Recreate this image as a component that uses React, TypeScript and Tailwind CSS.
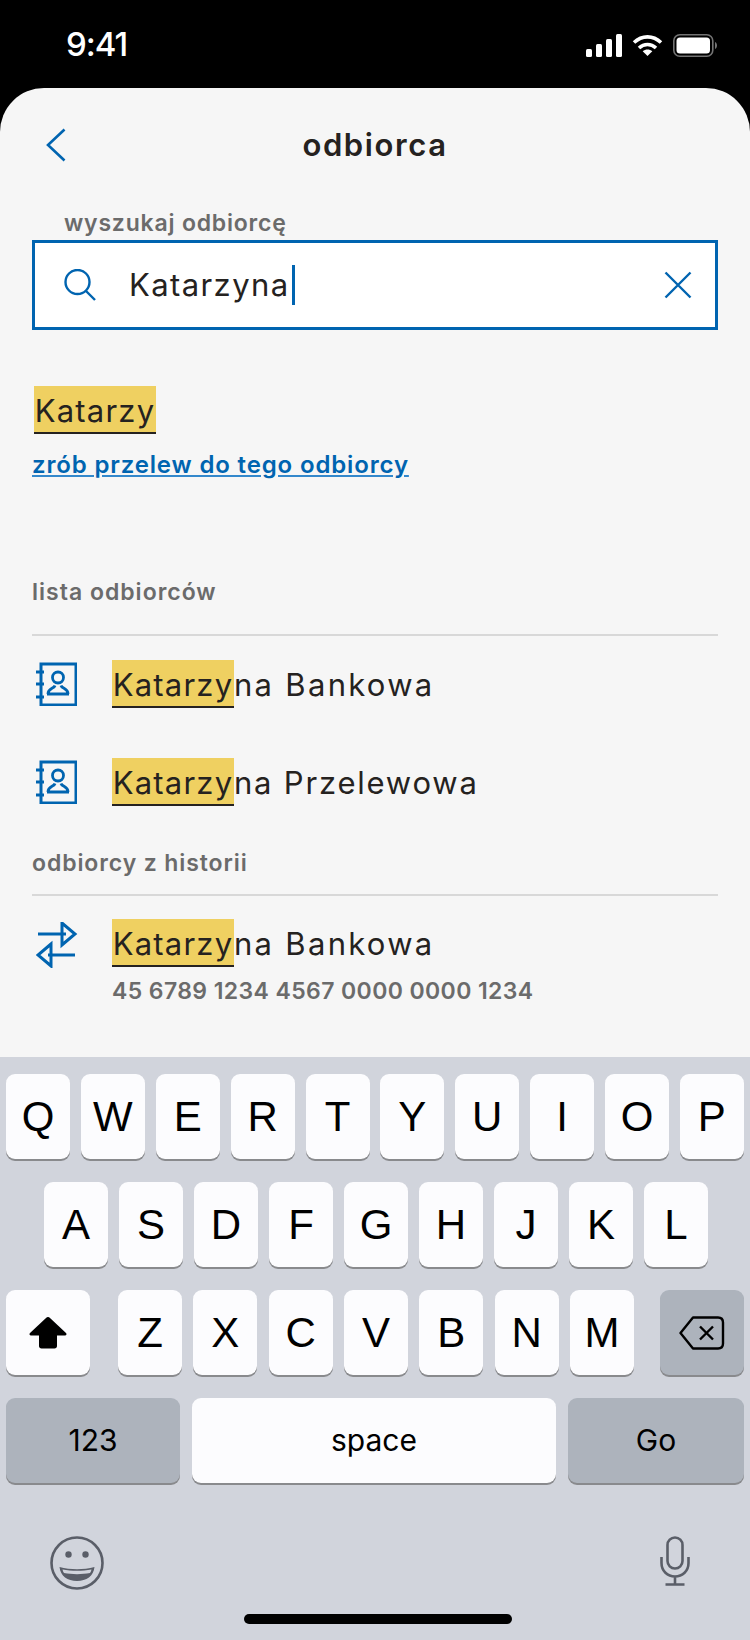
const ui = 'font-["Inter",sans-serif]'

function Hit({ rest, tight }: { rest?: string; tight?: boolean }) {
  return (
    <div className="flex h-12 items-center whitespace-nowrap text-[31px] leading-none text-[#252220]">
      <span className="flex h-12 w-[122px] items-center justify-center border-b-2 border-[#252220] bg-[#efd061] pt-[2px] tracking-[1.200px]">Katarzy</span>
      {rest && <span className={`pt-[1px] ${tight ? 'tracking-[1.800px]' : 'tracking-[2.300px]'}`}>{rest}</span>}
    </div>
  )
}

function BookIcon() {
  return (
    <svg width="42" height="44" viewBox="0 0 42 44" fill="none" stroke="#0064b0" strokeWidth="3">
      <rect x="6" y="2" width="35" height="41" />
      <path d="M1 10h8M1 22h8M1 35h8" />
      <circle cx="23" cy="15.500" r="5.500" strokeWidth="2.800" />
      <path d="M13 32c0-6 6-5 7-8.500M33 32c0-6-6-5-7-8.500M12 32h22" strokeWidth="2.800" />
    </svg>
  )
}

function SwapIcon() {
  return (
    <svg width="42" height="46" viewBox="0 0 42 46" fill="none" stroke="#0064b0" strokeWidth="3">
      <path d="M2 12h28M26 1l13 11-13 11z" />
      <path d="M39 33H12M15 22L2 33l13 11z" />
    </svg>
  )
}

function Key({ label, wide }: { label: string; wide?: boolean }) {
  return (
    <div className={`flex h-[85px] items-center justify-center rounded-[9px] bg-[#fcfcfe] text-[#000] shadow-[0_2px_0_#898a8d] ${wide ? 'w-[364px] text-[30px]' : 'w-16 font-["Liberation_Sans",sans-serif] text-[42px]'}`}>
      {label}
    </div>
  )
}

function DarkKey({ width, children }: { width: string; children: React.ReactNode }) {
  return (
    <div className={`flex h-[85px] items-center justify-center rounded-[9px] bg-[#adb3bc] text-[30px] text-[#000] shadow-[0_2px_0_#898a8d] ${width}`}>
      {children}
    </div>
  )
}

export default function App() {
  return (
    <div className={`flex h-[1640px] w-[750px] flex-col overflow-hidden bg-black ${ui}`}>
      {/* status bar */}
      <div className="flex h-[88px] shrink-0 items-start justify-between pl-[66px] pr-[33px] pt-[24px] text-white">
        <span className="text-[33px] font-medium leading-[40px] tracking-[-1px]">9:41</span>
        <div className="flex items-center gap-[10px] pt-[10px]">
          <svg width="36" height="23" viewBox="0 0 36 23" fill="white">
            <rect x="0" y="15" width="6" height="8" rx="1.5" />
            <rect x="10" y="10" width="6" height="13" rx="1.5" />
            <rect x="20" y="5" width="6" height="18" rx="1.5" />
            <rect x="30" y="0" width="6" height="23" rx="1.5" />
          </svg>
          <svg width="31" height="23" viewBox="0 0 31 23" fill="none" stroke="white" strokeWidth="3.6">
            <path d="M2 8.5c8-7.5 19-7.5 27 0" />
            <path d="M7 14c5-4.6 12-4.6 17 0" />
            <path d="M15.5 22l-4.8-4.8c2.8-2.2 6.8-2.2 9.6 0z" fill="white" stroke="none" />
          </svg>
          <svg width="44" height="23" viewBox="0 0 44 23" fill="none">
            <rect x="0.8" y="0.8" width="39" height="21.4" rx="6" stroke="white" strokeOpacity="0.45" strokeWidth="1.6" />
            <rect x="3.5" y="3.5" width="33.5" height="16" rx="3.5" fill="white" />
            <path d="M42 8v7c1.2-.4 2-2 2-3.500s-.8-3.100-2-3.500z" fill="white" fillOpacity="0.45" />
          </svg>
        </div>
      </div>

      {/* sheet */}
      <div className="flex h-[969px] shrink-0 flex-col rounded-t-[44px] bg-[#f6f6f6] px-8">
        <div className="flex h-[114px] shrink-0 items-center justify-between">
          <svg className="ml-[14px]" width="20" height="34" viewBox="0 0 20 34" fill="none" stroke="#0064b0" strokeWidth="2.6">
            <path d="M18.500 1.500L2 17l16.500 15.500" />
          </svg>
          <h1 className="pb-[2px] text-[31px] font-semibold leading-none tracking-[1.600px] text-[#252220]">odbiorca</h1>
          <div className="w-[34px]" />
        </div>

        <label className="h-[38px] shrink-0 pl-8 text-[23px] font-semibold leading-[42px] tracking-[0.800px] text-[#6b6b6b]">wyszukaj odbiorcę</label>

        <div className="flex h-[90px] shrink-0 items-center border-[3px] border-[#0064b0] bg-white pl-[29px] pr-[23px]">
          <svg width="32" height="32" viewBox="0 0 32 32" fill="none" stroke="#0064b0" strokeWidth="2.4">
            <circle cx="13.500" cy="13" r="12" />
            <path d="M22 22l9 9" />
          </svg>
          <div className="ml-[33px] flex flex-1 items-center whitespace-nowrap text-[31px] tracking-[1.400px] text-[#252220]">
            Katarzyna
            <span className="ml-[3px] h-[40px] w-[3px] bg-[#0064b0]" />
          </div>
          <svg width="28" height="28" viewBox="0 0 28 28" fill="none" stroke="#0064b0" strokeWidth="2.4">
            <path d="M1.500 1.500l25 25M26.500 1.500l-25 25" />
          </svg>
        </div>

        <div className="ml-[2px] mt-14 self-start">
          <Hit />
        </div>
        <a className="mt-4 h-[30px] shrink-0 text-[24px] font-semibold leading-[30px] tracking-[0.850px] text-[#0064b0] underline decoration-[#3388cc] underline-offset-2">zrób przelew do tego odbiorcy</a>

        <div className="mt-[97px] h-[30px] shrink-0 text-[23px] font-semibold leading-[30px] tracking-[1px] text-[#6b6b6b]">lista odbiorców</div>
        <div className="mt-[27px] h-[2px] shrink-0 bg-[#d8d8d8]" />

        <div className="mt-6 flex items-center">
          <div className="ml-[3px] w-[77px]"><BookIcon /></div>
          <Hit rest="na Bankowa" />
        </div>
        <div className="mt-[50px] flex items-center">
          <div className="ml-[3px] w-[77px]"><BookIcon /></div>
          <Hit rest="na Przelewowa" tight />
        </div>

        <div className="mt-[42px] h-[30px] shrink-0 text-[23px] font-semibold leading-[30px] tracking-[0.900px] text-[#6b6b6b]">odbiorcy z historii</div>
        <div className="mt-4 h-[2px] shrink-0 bg-[#d8d8d8]" />

        <div className="mt-[23px] flex items-start">
          <div className="ml-[4px] w-[76px] pt-[3px]"><SwapIcon /></div>
          <div>
            <Hit rest="na Bankowa" />
            <div className="mt-[9px] h-[30px] text-[23px] font-semibold leading-[30px] tracking-[0.400px] text-[#6b6b6b]">45 6789 1234 4567 0000 0000 1234</div>
          </div>
        </div>
      </div>

      {/* keyboard */}
      <div className="flex flex-1 flex-col bg-[#d1d4dc] pt-[17px]">
        <div className="flex justify-between px-[6px]">
          {['Q', 'W', 'E', 'R', 'T', 'Y', 'U', 'I', 'O', 'P'].map(k => <Key key={k} label={k} />)}
        </div>
        <div className="mt-[23px] flex justify-between pl-[44px] pr-[42px]">
          {['A', 'S', 'D', 'F', 'G', 'H', 'J', 'K', 'L'].map(k => <Key key={k} label={k} />)}
        </div>
        <div className="mt-[23px] flex items-center px-[6px]">
          <div className="flex h-[85px] w-[84px] items-center justify-center rounded-[9px] bg-[#fcfcfe] shadow-[0_2px_0_#898a8d]">
            <svg width="38" height="32" viewBox="0 0 38 32" fill="black">
              <path d="M19 0c.8 0 1.400.4 2 1l16 15c1 1 .4 2.500-1 2.500h-8V29c0 1.500-1 2.500-2.500 2.500h-13C11 31.500 10 30.500 10 29V18.500H2c-1.400 0-2-1.500-1-2.500L17 1c.6-.6 1.200-1 2-1z" />
            </svg>
          </div>
          <div className="ml-7 flex flex-1 justify-between">
            {['Z', 'X', 'C', 'V', 'B', 'N', 'M'].map(k => <Key key={k} label={k} />)}
          </div>
          <div className="ml-[26px]">
            <DarkKey width="w-[84px]">
              <svg width="46" height="34" viewBox="0 0 46 34" fill="none" stroke="black" strokeWidth="2.400">
                <path d="M14 1.500h25c3 0 5 2 5 5v21c0 3-2 5-5 5H14L1.500 17z" strokeLinejoin="round" />
                <path d="M21 10.500l13 13M34 10.500l-13 13" />
              </svg>
            </DarkKey>
          </div>
        </div>
        <div className="mt-[23px] flex justify-between px-[6px]">
          <DarkKey width="w-[174px]">123</DarkKey>
          <Key label="space" wide />
          <DarkKey width="w-[176px]">Go</DarkKey>
        </div>
        <div className="mt-[53px] flex items-start justify-between pl-[50px] pr-[60px]">
          <svg width="54" height="54" viewBox="0 0 54 54" fill="none" stroke="#5a5e68" strokeWidth="2.600">
            <circle cx="27" cy="27" r="25.500" />
            <circle cx="18.500" cy="18.500" r="3.200" fill="#5a5e68" stroke="none" />
            <circle cx="35.500" cy="18.500" r="3.200" fill="#5a5e68" stroke="none" />
            <path d="M9.500 31c11 3 24 3 35 0-1 9-8 14-17.500 14S10.500 40 9.500 31z" fill="#5a5e68" stroke="none" />
            <path d="M12.500 33.500c9 1.800 20 1.800 29 0-.3 1.500-.8 2.600-1.500 3.600-8 1.400-18 1.400-26 0-.7-1-1.200-2.100-1.500-3.600z" fill="#d1d4dc" stroke="none" />
          </svg>
          <svg width="30" height="50" viewBox="0 0 30 50" fill="none" stroke="#5a5e68" strokeWidth="2.600">
            <rect x="7.500" y="1.500" width="15" height="31" rx="7.500" />
            <path d="M1.500 21v6c0 8 6 13.500 13.500 13.500S28.500 35 28.500 27v-6M15 41v7M5.500 48.500h19" />
          </svg>
        </div>
        <div className="ml-[244px] mt-6 h-[10px] w-[268px] rounded-full bg-black" />
      </div>
    </div>
  )
}
